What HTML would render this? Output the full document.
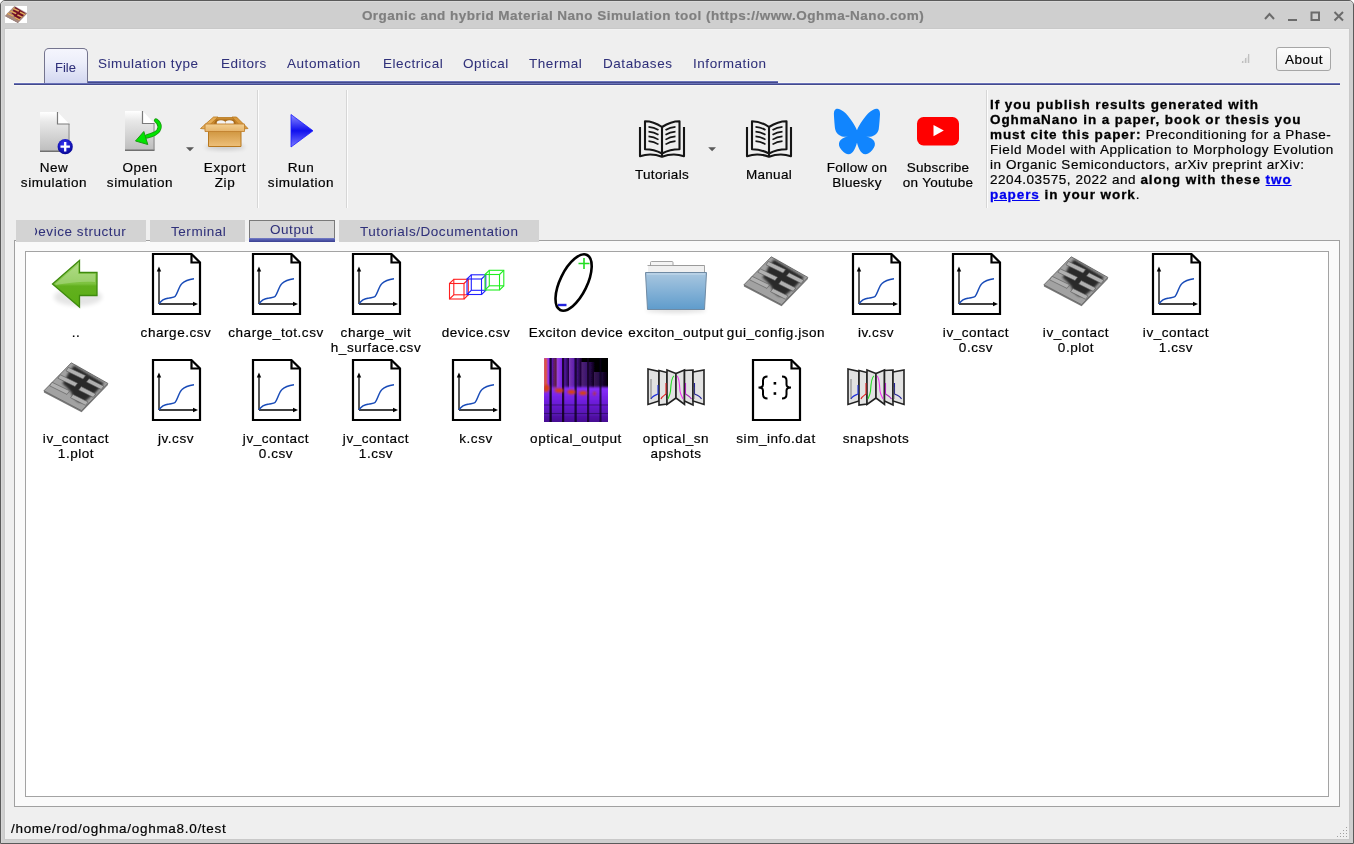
<!DOCTYPE html>
<html><head><meta charset="utf-8">
<style>
*{box-sizing:border-box}
html,body{margin:0;padding:0;width:1354px;height:844px;overflow:hidden;background:#ffffff}
body{position:relative;font-family:"Liberation Sans",sans-serif;font-size:14.7px;color:#000}
.a{position:absolute}
.t{position:absolute;white-space:nowrap;line-height:15px;font-size:13.5px;letter-spacing:0.55px;will-change:transform;-webkit-text-stroke:0.2px currentColor}
.c{text-align:center}
#win{left:0;top:0;width:1354px;height:844px;background:#cfcfcf;border:1px solid #5a5a5a;border-radius:5px 5px 0 0}
#content{left:5px;top:29px;width:1344px;height:810px;background:#efefef;border-top:1px solid #f3f3f3;border-left:1px solid #f2f2f2}
.tabtxt{color:#30317a;-webkit-text-stroke:0.05px currentColor}
.b{font-weight:bold;letter-spacing:0.92px;-webkit-text-stroke:0.3px currentColor}
</style></head><body>
<div id="win" class="a"></div>
<div class="a" style="left:1px;top:1px;width:1352px;height:842px;border-top:1px solid #d9d9d9;border-left:1px solid #d6d6d6;border-radius:4px 4px 0 0"></div>
<div class="a" style="left:4px;top:28px;width:1346px;height:812px;background:#c9c9c9"></div>
<div id="content" class="a"></div>

<!-- title -->
<div class="t" style="left:0;width:1354px;text-align:center;top:8px;font-weight:bold;font-size:13.5px;letter-spacing:0.47px;color:#7f7f7f;left:-34px">Organic and hybrid Material Nano Simulation tool (https://www.Oghma-Nano.com)</div>

<!-- main tab bar -->
<div class="a" style="left:14px;top:82px;width:1326px;height:4px;background:linear-gradient(#f6f6f4 0,#f6f6f4 25%,#6b73b9 25%,#6b73b9 50%,#434a8d 50%,#434a8d 75%,#f8f7f4 75%)"></div>
<div class="a" style="left:88px;top:80px;width:690px;height:3px;background:linear-gradient(#f6f6f4 0,#f6f6f4 33.3%,#6b73b9 33.3%,#6b73b9 66.6%,#434a8a 66.6%)"></div>
<div class="a" style="left:44px;top:48px;width:44px;height:35px;border:1px solid #74748e;border-bottom:none;border-radius:5px 5px 0 0;background:linear-gradient(#f5f5fd 0%,#eceefa 40%,#d3d7f1 100%)"></div>
<div class="t tabtxt" style="left:55px;top:60px;font-size:13px;letter-spacing:0">File</div>
<div class="t tabtxt" style="left:98px;top:55.5px">Simulation type</div>
<div class="t tabtxt" style="left:221px;top:55.5px">Editors</div>
<div class="t tabtxt" style="left:287px;top:55.5px">Automation</div>
<div class="t tabtxt" style="left:383px;top:55.5px">Electrical</div>
<div class="t tabtxt" style="left:463px;top:55.5px">Optical</div>
<div class="t tabtxt" style="left:529px;top:55.5px">Thermal</div>
<div class="t tabtxt" style="left:603px;top:55.5px">Databases</div>
<div class="t tabtxt" style="left:692.5px;top:55.5px">Information</div>

<!-- About -->
<div class="a" style="left:1276px;top:47px;width:55px;height:24px;border:1px solid #a6a6a6;border-radius:3px;background:linear-gradient(#fdfdfd,#ededed)"></div>
<div class="t" style="left:1284.5px;top:51.5px">About</div>

<!-- separators -->
<div class="a" style="left:257px;top:90px;width:2px;height:118px;background:linear-gradient(90deg,#d6d6d6 50%,#fdfdfd 50%)"></div>
<div class="a" style="left:346px;top:90px;width:2px;height:118px;background:linear-gradient(90deg,#d6d6d6 50%,#fdfdfd 50%)"></div>
<div class="a" style="left:986px;top:90px;width:2px;height:118px;background:linear-gradient(90deg,#d6d6d6 50%,#fdfdfd 50%)"></div>

<!-- toolbar labels -->
<div class="t c" style="left:14px;width:80px;top:159.5px">New<br>simulation</div>
<div class="t c" style="left:100px;width:80px;top:159.5px">Open<br>simulation</div>
<div class="t c" style="left:185px;width:80px;top:159.5px">Export<br>Zip</div>
<div class="t c" style="left:261px;width:80px;top:159.5px">Run<br>simulation</div>
<div class="t c" style="letter-spacing:0.3px;left:622px;width:80px;top:166.5px">Tutorials</div>
<div class="t c" style="letter-spacing:0.3px;left:729px;width:80px;top:166.5px">Manual</div>
<div class="t c" style="letter-spacing:0.3px;left:817px;width:80px;top:159.5px">Follow on<br>Bluesky</div>
<div class="t c" style="letter-spacing:0.3px;left:898px;width:80px;top:159.5px">Subscribe<br>on Youtube</div>

<!-- citation -->
<div class="t" style="left:990px;top:96.5px">
<span class="b">If you publish results generated with</span><br>
<span class="b">OghmaNano in a paper, book or thesis you</span><br>
<span class="b">must cite this paper:</span> Preconditioning for a Phase-<br>
Field Model with Application to Morphology Evolution<br>
in Organic Semiconductors, arXiv preprint arXiv:<br>
2204.03575, 2022 and <span class="b">along with these <u style="color:#0000ee">two</u></span><br>
<span class="b"><u style="color:#0000ee">papers</u> in your work</span>.
</div>

<!-- second tab bar -->
<div class="a" style="left:14px;top:240px;width:1326px;height:567px;background:#fafafa;border:1px solid #a0a0a0"></div>
<div class="a" style="left:16px;top:220px;width:130px;height:22px;background:#d3d3d3"></div>
<div class="a" style="left:150px;top:220px;width:95px;height:22px;background:#d3d3d3"></div>
<div class="a" style="left:245px;top:220px;width:94px;height:21px;background:#f2f2f2"></div>
<div class="a" style="left:249px;top:220px;width:86px;height:22px;background:#d6d6d6;border:1px solid #7a7a7a"></div>
<div class="a" style="left:249px;top:238px;width:86px;height:4px;background:linear-gradient(#7a82c8,#555db0 40%,#3a4090)"></div>
<div class="a" style="left:339px;top:220px;width:200px;height:22px;background:#d3d3d3"></div>
<div class="a" style="left:35px;top:220px;width:92px;height:22px;overflow:hidden"><div class="t tabtxt" style="left:-7px;top:3.5px">Device structur</div></div>
<div class="t tabtxt" style="left:170.5px;top:223.5px">Terminal</div>
<div class="t tabtxt" style="left:270px;top:221.5px">Output</div>
<div class="t tabtxt" style="left:359.5px;top:223.5px">Tutorials/Documentation</div>

<!-- file list -->
<div id="list" class="a" style="left:25px;top:251px;width:1304px;height:546px;background:#fff;border:1px solid #a3a3a3"></div>

<svg class="a" style="left:0;top:0" width="1354" height="844"><defs>
<filter id="blur1" x="-20%" y="-20%" width="140%" height="140%"><feGaussianBlur stdDeviation="1.2"/></filter>
<filter id="blur2" x="-50%" y="-50%" width="200%" height="200%"><feGaussianBlur stdDeviation="2"/></filter>
<filter id="blur05"><feGaussianBlur stdDeviation="0.5"/></filter>
<linearGradient id="gArrow" x1="0" y1="0" x2="0" y2="1"><stop offset="0" stop-color="#9fd46a"/><stop offset="0.5" stop-color="#7cc23e"/><stop offset="0.55" stop-color="#62b01e"/><stop offset="1" stop-color="#5aae14"/></linearGradient>
<linearGradient id="gFolder" x1="0" y1="0" x2="0" y2="1"><stop offset="0" stop-color="#a9c7e0"/><stop offset="1" stop-color="#5f9ccc"/></linearGradient>
<linearGradient id="gOptV" x1="0" y1="0" x2="0" y2="1"><stop offset="0" stop-color="#000" stop-opacity="0.95"/><stop offset="0.3" stop-color="#000" stop-opacity="0.7"/><stop offset="0.52" stop-color="#000" stop-opacity="0"/><stop offset="0.7" stop-color="#2a0060" stop-opacity="0.15"/><stop offset="1" stop-color="#2a0050" stop-opacity="0.4"/></linearGradient>
<linearGradient id="gOptH" x1="0" y1="0" x2="1" y2="0"><stop offset="0" stop-color="#000" stop-opacity="0"/><stop offset="0.45" stop-color="#000" stop-opacity="0.2"/><stop offset="1" stop-color="#000" stop-opacity="0.8"/></linearGradient>
<linearGradient id="gPage" x1="0" y1="0" x2="0" y2="1"><stop offset="0" stop-color="#ffffff"/><stop offset="0.25" stop-color="#e8e8e8"/><stop offset="1" stop-color="#bdbdbd"/></linearGradient>
<radialGradient id="gPlus" cx="0.45" cy="0.35" r="0.7"><stop offset="0" stop-color="#3a3aff"/><stop offset="1" stop-color="#00008a"/></radialGradient>
<linearGradient id="gRun" x1="0" y1="0" x2="0" y2="1"><stop offset="0" stop-color="#8a8aff"/><stop offset="0.5" stop-color="#1010ee"/><stop offset="1" stop-color="#7a7aff"/></linearGradient>
<linearGradient id="gBox" x1="0" y1="0" x2="0" y2="1"><stop offset="0" stop-color="#d09640"/><stop offset="1" stop-color="#eec07a"/></linearGradient>
<linearGradient id="gLid" x1="0" y1="0" x2="0" y2="1"><stop offset="0" stop-color="#f2cf92"/><stop offset="1" stop-color="#e6b46a"/></linearGradient>
</defs>
<!-- window icon -->
<rect x="5" y="6" width="22" height="17" fill="#fff"/>
<!-- window controls -->
<g stroke="#6b6b6b" stroke-width="2" fill="none">
<path d="M1265,19 L1269.5,14 L1274,19"/>
<path d="M1288,20 H1297"/>
<rect x="1311.5" y="12.5" width="7.5" height="7.5"/>
<path d="M1334.5,12 L1343,20.5 M1343,12 L1334.5,20.5"/>
</g>
<!-- signal icon -->
<g fill="#c0c0c0"><path d="M1241,63 L1249,55 V63 Z" fill="#e4e4e4"/><rect x="1242" y="61" width="1.3" height="2"/><rect x="1245" y="58" width="1.3" height="5"/><rect x="1248" y="54" width="1.3" height="9"/></g>
<!-- new simulation -->
<g>
<path d="M40,112 H57.5 L69.5,124 V151.5 H40 Z" fill="url(#gPage)"/>
<path d="M40,150.5 H69.5 V152 H40 Z" fill="#707070"/>
<path d="M69,124 V151" stroke="#8a8a8a" stroke-width="1"/>
<path d="M57.5,112 V124 H69.5 Z" fill="#fff"/>
<path d="M57.5,112 V124 H69.5" fill="none" stroke="#7a7a7a" stroke-width="1.2"/>
<circle cx="65.2" cy="146.7" r="7.6" fill="url(#gPlus)"/>
<path d="M60.5,146.7 H69.9 M65.2,142 V151.4" stroke="#fff" stroke-width="2.3"/>
</g>
<!-- open simulation -->
<g>
<path d="M125,111 H142.5 L154.5,123.5 V150.5 H125 Z" fill="url(#gPage)"/>
<path d="M125,149.5 H154.5 V151 H125 Z" fill="#707070"/>
<path d="M154,123.5 V150" stroke="#8a8a8a" stroke-width="1"/>
<path d="M142.5,111 V123.5 H154.5 Z" fill="#fff"/>
<path d="M142.5,111 V123.5 H154.5" fill="none" stroke="#7a7a7a" stroke-width="1.2"/>
<path d="M156,120.5 C161,124 161,130 155,133.5 C151,135.5 148.5,136 146.5,136.5" fill="none" stroke="#1a9a10" stroke-width="4.2" stroke-linecap="round"/>
<path d="M156,120.5 C161,124 161,130 155,133.5 C151,135.5 148.5,136 146.5,136.5" fill="none" stroke="#00e400" stroke-width="2.6" stroke-linecap="round"/>
<path d="M135.5,141 L143.8,131.5 L147.8,144.5 Z" fill="#00e400" stroke="#1a9a10" stroke-width="1" stroke-linejoin="round"/>
</g>
<!-- dropdown arrows -->
<path d="M186,147.2 H194 L190,151.3 Z" fill="#5a5a5a"/>
<path d="M708.2,147.2 H716 L712.1,151.3 Z" fill="#5a5a5a"/>
<!-- export zip -->
<g>
<ellipse cx="225" cy="147" rx="20" ry="3" fill="#000" opacity="0.15" filter="url(#blur2)"/>
<path d="M213.5,117.5 H236.5 L241,124.5 H209 Z" fill="#c98a30" stroke="#b8781e" stroke-width="0.8"/>
<path d="M216,119.5 H234 L236.5,124.5 H213.5 Z" fill="#a86a1a"/>
<ellipse cx="221" cy="123" rx="4.3" ry="2.7" fill="#f4f4f4"/>
<ellipse cx="229.5" cy="123" rx="4.3" ry="2.7" fill="#f4f4f4"/>
<path d="M213.5,117 H218 L205.5,129 L200.5,128.5 Z" fill="#e6ad58" stroke="#b8781e" stroke-width="0.8" stroke-linejoin="round"/>
<path d="M232,117 H236.5 L248,128.5 L243,129 Z" fill="#d9993e" stroke="#b8781e" stroke-width="0.8" stroke-linejoin="round"/>
<path d="M208.5,131 H241 V146.5 H208.5 Z" fill="url(#gBox)" stroke="#b8781e" stroke-width="1"/>
<path d="M205,124 H244.5 L244.5,131.5 H205 Z" fill="url(#gLid)" stroke="#c28230" stroke-width="0.9"/>
</g>
<!-- run -->
<path d="M291,114.5 L313,130.8 L291,147 Z" fill="url(#gRun)" stroke="#1a1aff" stroke-width="0.8" stroke-linejoin="round"/>
<!-- books -->
<g id="book" fill="none" stroke="#151515" stroke-width="2.1" stroke-linejoin="round" stroke-linecap="butt">
<g transform="translate(639,120)">
<path d="M1,7 V36.2 Q12,32.5 23,36.8 Q34,32.5 45,36.2 V7"/>
<path d="M23,7 Q14.5,1.2 6,1.2 V29.2 Q15,29.2 23,33.5 Q31,29.2 40.5,29.2 V1.2 Q32,1.2 23,7 Z"/>
<path d="M23,7 V36"/>
<g stroke-width="1.7">
<path d="M9.5,6.8 Q15,7.2 19.5,10"/><path d="M9.5,11.6 Q15,12 19.5,14.8"/><path d="M9.5,16.4 Q15,16.8 19.5,19.6"/><path d="M9.5,21.2 Q15,21.6 19.5,24.4"/>
<path d="M26.5,10 Q31,7.2 36.5,6.8"/><path d="M26.5,14.8 Q31,12 36.5,11.6"/><path d="M26.5,19.6 Q31,16.8 36.5,16.4"/><path d="M26.5,24.4 Q31,21.6 36.5,21.2"/>
</g></g></g>
<g fill="none" stroke="#151515" stroke-width="2.1" stroke-linejoin="round">
<g transform="translate(746,120)">
<path d="M1,7 V36.2 Q12,32.5 23,36.8 Q34,32.5 45,36.2 V7"/>
<path d="M23,7 Q14.5,1.2 6,1.2 V29.2 Q15,29.2 23,33.5 Q31,29.2 40.5,29.2 V1.2 Q32,1.2 23,7 Z"/>
<path d="M23,7 V36"/>
<g stroke-width="1.7">
<path d="M9.5,6.8 Q15,7.2 19.5,10"/><path d="M9.5,11.6 Q15,12 19.5,14.8"/><path d="M9.5,16.4 Q15,16.8 19.5,19.6"/><path d="M9.5,21.2 Q15,21.6 19.5,24.4"/>
<path d="M26.5,10 Q31,7.2 36.5,6.8"/><path d="M26.5,14.8 Q31,12 36.5,11.6"/><path d="M26.5,19.6 Q31,16.8 36.5,16.4"/><path d="M26.5,24.4 Q31,21.6 36.5,21.2"/>
</g></g></g>
<!-- bluesky -->
<g transform="translate(833.9,108.6) scale(0.0795,0.0892) translate(-10,-8)">
<path fill="#1185fe" d="M135.72 44.03C202.216 93.951 273.74 195.17 300 249.49c26.262-54.316 97.782-155.54 164.28-205.46C512.26 8.009 590-19.862 590 68.825c0 17.712-10.155 148.79-16.111 170.07-20.703 73.984-96.144 92.854-163.25 81.433 117.3 19.964 147.14 86.092 82.697 152.22-122.39 125.59-175.91-31.511-189.63-71.766-2.514-7.38-3.69-10.832-3.708-7.896-.017-2.936-1.193.516-3.707 7.896-13.714 40.255-67.233 197.36-189.63 71.766-64.444-66.128-34.605-132.26 82.697-152.22-67.108 11.421-142.55-7.449-163.25-81.433C20.15 217.613 9.997 86.535 9.997 68.825c0-88.687 77.742-60.816 125.72-24.795z"/>
</g>
<!-- youtube -->
<rect x="917" y="117" width="42" height="28.5" rx="6.5" fill="#ff0000"/>
<path d="M933.5,125 L943.8,130.6 L933.5,136.2 Z" fill="#fff"/>
<g><ellipse cx="78" cy="297" rx="24" ry="9" fill="#000" opacity="0.10" filter="url(#blur2)"/><path d="M52.5,284 L79.5,260.5 V272.5 H97 V295.5 H79.5 V307 Z" fill="url(#gArrow)" stroke="#3e8a0e" stroke-width="1.3" stroke-linejoin="miter"/><path d="M55,284 L78,264.5 V274 H95 V282 C82,281 68,283 56,285 Z" fill="#fff" opacity="0.22"/></g>
<g transform="translate(152,253)"><path d="M1,1 H39.5 L48,9.5 V61 H1 Z" fill="#fff" stroke="#000" stroke-width="2.2" stroke-linejoin="miter"/><path d="M39.5,1 V9.5 H48" fill="none" stroke="#000" stroke-width="2.2"/><path d="M7,51 V16" stroke="#000" stroke-width="1.3" fill="none"/><path d="M7,13.5 L4.8,18.5 H9.2 Z" fill="#000"/><path d="M7,51 H42" stroke="#000" stroke-width="1.3" fill="none"/><path d="M46,51 L41,48.8 V53.2 Z" fill="#000"/><path d="M7,51 C9,47.5 13,45.5 17,45 C20,44.5 22,44.5 23,43.5 C25.5,41 27,33 30,30.5 C33,27.5 38,26.2 42,25.7" stroke="#1a4cb8" stroke-width="1.5" fill="none"/></g>
<g transform="translate(252,253)"><path d="M1,1 H39.5 L48,9.5 V61 H1 Z" fill="#fff" stroke="#000" stroke-width="2.2" stroke-linejoin="miter"/><path d="M39.5,1 V9.5 H48" fill="none" stroke="#000" stroke-width="2.2"/><path d="M7,51 V16" stroke="#000" stroke-width="1.3" fill="none"/><path d="M7,13.5 L4.8,18.5 H9.2 Z" fill="#000"/><path d="M7,51 H42" stroke="#000" stroke-width="1.3" fill="none"/><path d="M46,51 L41,48.8 V53.2 Z" fill="#000"/><path d="M7,51 C9,47.5 13,45.5 17,45 C20,44.5 22,44.5 23,43.5 C25.5,41 27,33 30,30.5 C33,27.5 38,26.2 42,25.7" stroke="#1a4cb8" stroke-width="1.5" fill="none"/></g>
<g transform="translate(352,253)"><path d="M1,1 H39.5 L48,9.5 V61 H1 Z" fill="#fff" stroke="#000" stroke-width="2.2" stroke-linejoin="miter"/><path d="M39.5,1 V9.5 H48" fill="none" stroke="#000" stroke-width="2.2"/><path d="M7,51 V16" stroke="#000" stroke-width="1.3" fill="none"/><path d="M7,13.5 L4.8,18.5 H9.2 Z" fill="#000"/><path d="M7,51 H42" stroke="#000" stroke-width="1.3" fill="none"/><path d="M46,51 L41,48.8 V53.2 Z" fill="#000"/><path d="M7,51 C9,47.5 13,45.5 17,45 C20,44.5 22,44.5 23,43.5 C25.5,41 27,33 30,30.5 C33,27.5 38,26.2 42,25.7" stroke="#1a4cb8" stroke-width="1.5" fill="none"/></g>
<g transform="translate(852,253)"><path d="M1,1 H39.5 L48,9.5 V61 H1 Z" fill="#fff" stroke="#000" stroke-width="2.2" stroke-linejoin="miter"/><path d="M39.5,1 V9.5 H48" fill="none" stroke="#000" stroke-width="2.2"/><path d="M7,51 V16" stroke="#000" stroke-width="1.3" fill="none"/><path d="M7,13.5 L4.8,18.5 H9.2 Z" fill="#000"/><path d="M7,51 H42" stroke="#000" stroke-width="1.3" fill="none"/><path d="M46,51 L41,48.8 V53.2 Z" fill="#000"/><path d="M7,51 C9,47.5 13,45.5 17,45 C20,44.5 22,44.5 23,43.5 C25.5,41 27,33 30,30.5 C33,27.5 38,26.2 42,25.7" stroke="#1a4cb8" stroke-width="1.5" fill="none"/></g>
<g transform="translate(952,253)"><path d="M1,1 H39.5 L48,9.5 V61 H1 Z" fill="#fff" stroke="#000" stroke-width="2.2" stroke-linejoin="miter"/><path d="M39.5,1 V9.5 H48" fill="none" stroke="#000" stroke-width="2.2"/><path d="M7,51 V16" stroke="#000" stroke-width="1.3" fill="none"/><path d="M7,13.5 L4.8,18.5 H9.2 Z" fill="#000"/><path d="M7,51 H42" stroke="#000" stroke-width="1.3" fill="none"/><path d="M46,51 L41,48.8 V53.2 Z" fill="#000"/><path d="M7,51 C9,47.5 13,45.5 17,45 C20,44.5 22,44.5 23,43.5 C25.5,41 27,33 30,30.5 C33,27.5 38,26.2 42,25.7" stroke="#1a4cb8" stroke-width="1.5" fill="none"/></g>
<g transform="translate(1152,253)"><path d="M1,1 H39.5 L48,9.5 V61 H1 Z" fill="#fff" stroke="#000" stroke-width="2.2" stroke-linejoin="miter"/><path d="M39.5,1 V9.5 H48" fill="none" stroke="#000" stroke-width="2.2"/><path d="M7,51 V16" stroke="#000" stroke-width="1.3" fill="none"/><path d="M7,13.5 L4.8,18.5 H9.2 Z" fill="#000"/><path d="M7,51 H42" stroke="#000" stroke-width="1.3" fill="none"/><path d="M46,51 L41,48.8 V53.2 Z" fill="#000"/><path d="M7,51 C9,47.5 13,45.5 17,45 C20,44.5 22,44.5 23,43.5 C25.5,41 27,33 30,30.5 C33,27.5 38,26.2 42,25.7" stroke="#1a4cb8" stroke-width="1.5" fill="none"/></g>
<g stroke="#ff2020" stroke-width="1.1" fill="none"><rect x="453.8" y="279.3" width="14.5" height="15.5"/><rect x="449.5" y="283.5" width="14.5" height="15.5"/><path d="M449.5,283.5 l4.3,-4.2 M464.0,283.5 l4.3,-4.2 M449.5,299.0 l4.3,-4.2 M464.0,299.0 l4.3,-4.2"/></g>
<g stroke="#2020ff" stroke-width="1.1" fill="none"><rect x="471.3" y="274.8" width="14.5" height="15.5"/><rect x="467" y="279" width="14.5" height="15.5"/><path d="M467,279 l4.3,-4.2 M481.5,279 l4.3,-4.2 M467,294.5 l4.3,-4.2 M481.5,294.5 l4.3,-4.2"/></g>
<g stroke="#20ee20" stroke-width="1.1" fill="none"><rect x="489.3" y="270.3" width="14.5" height="15.5"/><rect x="485" y="274.5" width="14.5" height="15.5"/><path d="M485,274.5 l4.3,-4.2 M499.5,274.5 l4.3,-4.2 M485,290.0 l4.3,-4.2 M499.5,290.0 l4.3,-4.2"/></g>
<ellipse cx="573.6" cy="282.5" rx="13.5" ry="30.6" transform="rotate(26 573.6 282.5)" fill="none" stroke="#000" stroke-width="2.6"/><path d="M578.5,263.5 H589.5 M584,258 V269" stroke="#22dd22" stroke-width="1.6"/><path d="M558,305 H566.5" stroke="#2222dd" stroke-width="2.4"/>
<g><ellipse cx="676" cy="310" rx="30" ry="3" fill="#000" opacity="0.12" filter="url(#blur2)"/><path d="M650.5,272 V262.5 Q650.5,261.5 651.5,261.5 H672 Q673,261.5 673,262.5 V265.5 H703.5 Q704.5,265.5 704.5,266.5 V272 Z" fill="#f4f4f4" stroke="#9a9a9a" stroke-width="0.9"/><path d="M648,266 H705 V272 H648 Z" fill="#f0f0f0"/><path d="M647.5,265.5 H704.5 V273" fill="none" stroke="#9a9a9a" stroke-width="0.9"/><path d="M645.5,272.5 H706.5 L704.5,309.5 H647.5 Z" fill="url(#gFolder)" stroke="#6f8aa3" stroke-width="1" stroke-linejoin="round"/><path d="M647,274 H705" stroke="#c8dcec" stroke-width="1"/></g>
<g transform="translate(743,253)"><path d="M0.9,31.8 L28.3,3.8 L64.9,24.4 L38.6,51.7 Z" fill="#a2a2a2"/><path d="M0.9,31.8 L38.6,51.7 L64.9,24.4 L64.9,26 L38.6,53.3 L0.9,33.4 Z" fill="#7a7a7a"/><path d="M0.9,31.8 L28.3,3.8 L64.9,24.4 L38.6,51.7 Z" fill="none" stroke="#5a5a5a" stroke-width="0.8" stroke-linejoin="round"/><path d="M31,6.5 L61,24.5 L52,34 L42,42.5 L36,43.5 L30.5,39 L28,33 L24,28.5 L19.5,24.5 L23,19 L26,13 Z" fill="#2a2a2a" filter="url(#blur1)"/><g fill="#b0b0b0" stroke="#555" stroke-width="0.6" stroke-linejoin="round"><path d="M25.4,8.4 L42.6,16.6 L40,20 L23,11.8 Z"/><path d="M17.3,15.8 L34.6,24.2 L32,27.6 L14.8,19.2 Z"/><path d="M9.1,23.3 L26.6,31.8 L24,35.4 L6.6,26.8 Z"/><path d="M46,19.7 L60.8,27.2 L58.3,30.5 L43.5,23 Z"/><path d="M38.2,27.6 L52.8,35 L50.2,38.3 L35.7,31 Z"/><path d="M30,35.4 L45.2,43 L42.6,46.3 L27.5,38.7 Z"/></g></g>
<g transform="translate(1043,253)"><path d="M0.9,31.8 L28.3,3.8 L64.9,24.4 L38.6,51.7 Z" fill="#a2a2a2"/><path d="M0.9,31.8 L38.6,51.7 L64.9,24.4 L64.9,26 L38.6,53.3 L0.9,33.4 Z" fill="#7a7a7a"/><path d="M0.9,31.8 L28.3,3.8 L64.9,24.4 L38.6,51.7 Z" fill="none" stroke="#5a5a5a" stroke-width="0.8" stroke-linejoin="round"/><path d="M31,6.5 L61,24.5 L52,34 L42,42.5 L36,43.5 L30.5,39 L28,33 L24,28.5 L19.5,24.5 L23,19 L26,13 Z" fill="#2a2a2a" filter="url(#blur1)"/><g fill="#b0b0b0" stroke="#555" stroke-width="0.6" stroke-linejoin="round"><path d="M25.4,8.4 L42.6,16.6 L40,20 L23,11.8 Z"/><path d="M17.3,15.8 L34.6,24.2 L32,27.6 L14.8,19.2 Z"/><path d="M9.1,23.3 L26.6,31.8 L24,35.4 L6.6,26.8 Z"/><path d="M46,19.7 L60.8,27.2 L58.3,30.5 L43.5,23 Z"/><path d="M38.2,27.6 L52.8,35 L50.2,38.3 L35.7,31 Z"/><path d="M30,35.4 L45.2,43 L42.6,46.3 L27.5,38.7 Z"/></g></g>
<g transform="translate(43,359)"><path d="M0.9,31.8 L28.3,3.8 L64.9,24.4 L38.6,51.7 Z" fill="#a2a2a2"/><path d="M0.9,31.8 L38.6,51.7 L64.9,24.4 L64.9,26 L38.6,53.3 L0.9,33.4 Z" fill="#7a7a7a"/><path d="M0.9,31.8 L28.3,3.8 L64.9,24.4 L38.6,51.7 Z" fill="none" stroke="#5a5a5a" stroke-width="0.8" stroke-linejoin="round"/><path d="M31,6.5 L61,24.5 L52,34 L42,42.5 L36,43.5 L30.5,39 L28,33 L24,28.5 L19.5,24.5 L23,19 L26,13 Z" fill="#2a2a2a" filter="url(#blur1)"/><g fill="#b0b0b0" stroke="#555" stroke-width="0.6" stroke-linejoin="round"><path d="M25.4,8.4 L42.6,16.6 L40,20 L23,11.8 Z"/><path d="M17.3,15.8 L34.6,24.2 L32,27.6 L14.8,19.2 Z"/><path d="M9.1,23.3 L26.6,31.8 L24,35.4 L6.6,26.8 Z"/><path d="M46,19.7 L60.8,27.2 L58.3,30.5 L43.5,23 Z"/><path d="M38.2,27.6 L52.8,35 L50.2,38.3 L35.7,31 Z"/><path d="M30,35.4 L45.2,43 L42.6,46.3 L27.5,38.7 Z"/></g></g>
<g transform="translate(4.9,4.9) scale(0.338)"><path d="M0.9,31.8 L28.3,3.8 L64.9,24.4 L38.6,51.7 Z" fill="#a88a80"/><path d="M0.9,31.8 L38.6,51.7 L64.9,24.4 L64.9,26 L38.6,53.3 L0.9,33.4 Z" fill="#806058"/><path d="M0.9,31.8 L28.3,3.8 L64.9,24.4 L38.6,51.7 Z" fill="none" stroke="#7a5a50" stroke-width="0.8" stroke-linejoin="round"/><path d="M31,6.5 L61,24.5 L52,34 L42,42.5 L36,43.5 L30.5,39 L28,33 L24,28.5 L19.5,24.5 L23,19 L26,13 Z" fill="#700a28" filter="url(#blur1)"/><g fill="#e8b464" stroke="#a06030" stroke-width="0.6" stroke-linejoin="round"><path d="M25.4,8.4 L42.6,16.6 L40,20 L23,11.8 Z"/><path d="M17.3,15.8 L34.6,24.2 L32,27.6 L14.8,19.2 Z"/><path d="M9.1,23.3 L26.6,31.8 L24,35.4 L6.6,26.8 Z"/><path d="M46,19.7 L60.8,27.2 L58.3,30.5 L43.5,23 Z"/><path d="M38.2,27.6 L52.8,35 L50.2,38.3 L35.7,31 Z"/><path d="M30,35.4 L45.2,43 L42.6,46.3 L27.5,38.7 Z"/></g></g>
<g transform="translate(152,359)"><path d="M1,1 H39.5 L48,9.5 V61 H1 Z" fill="#fff" stroke="#000" stroke-width="2.2" stroke-linejoin="miter"/><path d="M39.5,1 V9.5 H48" fill="none" stroke="#000" stroke-width="2.2"/><path d="M7,51 V16" stroke="#000" stroke-width="1.3" fill="none"/><path d="M7,13.5 L4.8,18.5 H9.2 Z" fill="#000"/><path d="M7,51 H42" stroke="#000" stroke-width="1.3" fill="none"/><path d="M46,51 L41,48.8 V53.2 Z" fill="#000"/><path d="M7,51 C9,47.5 13,45.5 17,45 C20,44.5 22,44.5 23,43.5 C25.5,41 27,33 30,30.5 C33,27.5 38,26.2 42,25.7" stroke="#1a4cb8" stroke-width="1.5" fill="none"/></g>
<g transform="translate(252,359)"><path d="M1,1 H39.5 L48,9.5 V61 H1 Z" fill="#fff" stroke="#000" stroke-width="2.2" stroke-linejoin="miter"/><path d="M39.5,1 V9.5 H48" fill="none" stroke="#000" stroke-width="2.2"/><path d="M7,51 V16" stroke="#000" stroke-width="1.3" fill="none"/><path d="M7,13.5 L4.8,18.5 H9.2 Z" fill="#000"/><path d="M7,51 H42" stroke="#000" stroke-width="1.3" fill="none"/><path d="M46,51 L41,48.8 V53.2 Z" fill="#000"/><path d="M7,51 C9,47.5 13,45.5 17,45 C20,44.5 22,44.5 23,43.5 C25.5,41 27,33 30,30.5 C33,27.5 38,26.2 42,25.7" stroke="#1a4cb8" stroke-width="1.5" fill="none"/></g>
<g transform="translate(352,359)"><path d="M1,1 H39.5 L48,9.5 V61 H1 Z" fill="#fff" stroke="#000" stroke-width="2.2" stroke-linejoin="miter"/><path d="M39.5,1 V9.5 H48" fill="none" stroke="#000" stroke-width="2.2"/><path d="M7,51 V16" stroke="#000" stroke-width="1.3" fill="none"/><path d="M7,13.5 L4.8,18.5 H9.2 Z" fill="#000"/><path d="M7,51 H42" stroke="#000" stroke-width="1.3" fill="none"/><path d="M46,51 L41,48.8 V53.2 Z" fill="#000"/><path d="M7,51 C9,47.5 13,45.5 17,45 C20,44.5 22,44.5 23,43.5 C25.5,41 27,33 30,30.5 C33,27.5 38,26.2 42,25.7" stroke="#1a4cb8" stroke-width="1.5" fill="none"/></g>
<g transform="translate(452,359)"><path d="M1,1 H39.5 L48,9.5 V61 H1 Z" fill="#fff" stroke="#000" stroke-width="2.2" stroke-linejoin="miter"/><path d="M39.5,1 V9.5 H48" fill="none" stroke="#000" stroke-width="2.2"/><path d="M7,51 V16" stroke="#000" stroke-width="1.3" fill="none"/><path d="M7,13.5 L4.8,18.5 H9.2 Z" fill="#000"/><path d="M7,51 H42" stroke="#000" stroke-width="1.3" fill="none"/><path d="M46,51 L41,48.8 V53.2 Z" fill="#000"/><path d="M7,51 C9,47.5 13,45.5 17,45 C20,44.5 22,44.5 23,43.5 C25.5,41 27,33 30,30.5 C33,27.5 38,26.2 42,25.7" stroke="#1a4cb8" stroke-width="1.5" fill="none"/></g>
<g transform="translate(544,358)"><clipPath id="clipOpt"><rect x="0" y="0" width="64" height="64"/></clipPath><linearGradient id="gBand" x1="0" y1="0" x2="1" y2="0"><stop offset="0" stop-color="#b050ff"/><stop offset="0.45" stop-color="#8024f8"/><stop offset="1" stop-color="#180030"/></linearGradient><linearGradient id="gBandV" x1="0" y1="0" x2="0" y2="1"><stop offset="0" stop-color="#000" stop-opacity="0.35"/><stop offset="1" stop-color="#000" stop-opacity="0"/></linearGradient><linearGradient id="gLow" x1="0" y1="0" x2="0" y2="1"><stop offset="0" stop-color="#8a30ff"/><stop offset="0.4" stop-color="#6c1cd8"/><stop offset="1" stop-color="#3c0880"/></linearGradient><g clip-path="url(#clipOpt)"><rect width="64" height="64" fill="#000"/><g filter="url(#blur05)"><rect x="0" y="0" width="13" height="34" fill="url(#gBand)"/><rect x="12.5" y="0" width="13" height="34" fill="url(#gBand)" opacity="0.9"/><rect x="25" y="0" width="13" height="34" fill="url(#gBand)" opacity="0.7"/><rect x="37.5" y="4" width="13" height="30" fill="url(#gBand)" opacity="0.45"/><rect x="50" y="14" width="13" height="20" fill="url(#gBand)" opacity="0.3"/></g><rect x="-4" y="29" width="72" height="40" fill="url(#gLow)" filter="url(#blur1)"/><g filter="url(#blur05)"><rect x="5.5" y="0" width="2.2" height="64" fill="#0a0018" opacity="0.9"/><rect x="18" y="0" width="2.2" height="64" fill="#0a0018" opacity="0.85"/><rect x="30.5" y="0" width="2.2" height="64" fill="#0a0018" opacity="0.8"/><rect x="43" y="0" width="2.2" height="64" fill="#0a0018" opacity="0.75"/><rect x="55.5" y="0" width="2" height="64" fill="#0a0018" opacity="0.7"/></g><g filter="url(#blur1)"><rect x="0" y="0" width="3" height="34" fill="#e8581a"/><rect x="10.5" y="0" width="1.2" height="34" fill="#d04818" opacity="0.8"/><ellipse cx="2.5" cy="30" rx="3" ry="3.5" fill="#d8400e"/><ellipse cx="15.5" cy="32.5" rx="4" ry="2.2" fill="#d8420e"/><ellipse cx="27.5" cy="34" rx="4" ry="2.2" fill="#d8420e"/><ellipse cx="39" cy="35" rx="4" ry="2" fill="#d8420e"/><ellipse cx="50.5" cy="35.5" rx="1.2" ry="2" fill="#c03a18"/></g><rect x="0" y="46.5" width="64" height="1" fill="#100020" opacity="0.5"/><rect x="0" y="55" width="64" height="1" fill="#100020" opacity="0.4"/></g></g>
<g transform="translate(648,369)">
<polygon points="0,0 11,2.5 11,32 0,35.5" fill="#e2e2e2" stroke="#222" stroke-width="1.6"/>
<polygon points="11,1.5 19,3.5 19,35 11,36" fill="#e2e2e2" stroke="#222" stroke-width="1.6"/>
<polygon points="19,1 28,4.5 28,29 19,35.5" fill="#e2e2e2" stroke="#222" stroke-width="1.6"/>
<polygon points="28,4.5 36.5,1 36.5,35.5 28,29" fill="#e2e2e2" stroke="#222" stroke-width="1.6"/>
<polygon points="36.5,1.5 45,1 45,36 36.5,32" fill="#e2e2e2" stroke="#222" stroke-width="1.6"/>
<polygon points="45,3 56,1 56,35.5 45,32" fill="#e2e2e2" stroke="#222" stroke-width="1.6"/>
<path d="M3,30 C4,27 8,26 10,25 V16" stroke="#2233dd" stroke-width="1.1" fill="none"/><path d="M13,30 C14,27 17,26 18,25 V14" stroke="#dd2222" stroke-width="1.1" fill="none"/><path d="M20,30 C21,27 22,26 22.5,22 C23,14 23.5,8 26,7" stroke="#22dd22" stroke-width="1.1" fill="none"/><path d="M29,7 C31,8 31.5,14 32,22 C32.5,26 34,27 35,30" stroke="#ee33ee" stroke-width="1.1" fill="none"/><path d="M37.5,14 V25 C39,26 42,27 43.5,30" stroke="#aa22bb" stroke-width="1.1" fill="none"/><path d="M46.5,14 V25 C49,26 52,27 53.5,30" stroke="#222299" stroke-width="1.1" fill="none"/><path d="M3,10 V30 M46,18 V30" stroke="#555" stroke-width="0.7" fill="none"/>
</g>
<g transform="translate(752,359)"><path d="M1,1 H39.5 L48,9.5 V61 H1 Z" fill="#fff" stroke="#000" stroke-width="2.2" stroke-linejoin="miter"/><path d="M39.5,1 V9.5 H48" fill="none" stroke="#000" stroke-width="2.2"/><path d="M15.5,17.5 Q11,17.5 11,21.5 V25.5 Q11,28.5 6.5,28.5 Q11,28.5 11,31.5 V35.5 Q11,39.5 15.5,39.5 M30,17.5 Q34.5,17.5 34.5,21.5 V25.5 Q34.5,28.5 39,28.5 Q34.5,28.5 34.5,31.5 V35.5 Q34.5,39.5 30,39.5" fill="none" stroke="#000" stroke-width="2"/><rect x="21.6" y="23" width="2.6" height="2.6"/><rect x="21.6" y="33.2" width="2.6" height="2.6"/></g>
<g transform="translate(848,369)">
<polygon points="0,0 11,2.5 11,32 0,35.5" fill="#e2e2e2" stroke="#222" stroke-width="1.6"/>
<polygon points="11,1.5 19,3.5 19,35 11,36" fill="#e2e2e2" stroke="#222" stroke-width="1.6"/>
<polygon points="19,1 28,4.5 28,29 19,35.5" fill="#e2e2e2" stroke="#222" stroke-width="1.6"/>
<polygon points="28,4.5 36.5,1 36.5,35.5 28,29" fill="#e2e2e2" stroke="#222" stroke-width="1.6"/>
<polygon points="36.5,1.5 45,1 45,36 36.5,32" fill="#e2e2e2" stroke="#222" stroke-width="1.6"/>
<polygon points="45,3 56,1 56,35.5 45,32" fill="#e2e2e2" stroke="#222" stroke-width="1.6"/>
<path d="M3,30 C4,27 8,26 10,25 V16" stroke="#2233dd" stroke-width="1.1" fill="none"/><path d="M13,30 C14,27 17,26 18,25 V14" stroke="#dd2222" stroke-width="1.1" fill="none"/><path d="M20,30 C21,27 22,26 22.5,22 C23,14 23.5,8 26,7" stroke="#22dd22" stroke-width="1.1" fill="none"/><path d="M29,7 C31,8 31.5,14 32,22 C32.5,26 34,27 35,30" stroke="#ee33ee" stroke-width="1.1" fill="none"/><path d="M37.5,14 V25 C39,26 42,27 43.5,30" stroke="#aa22bb" stroke-width="1.1" fill="none"/><path d="M46.5,14 V25 C49,26 52,27 53.5,30" stroke="#222299" stroke-width="1.1" fill="none"/><path d="M3,10 V30 M46,18 V30" stroke="#555" stroke-width="0.7" fill="none"/>
</g></svg>
<div class="t c" style="left:16px;width:120px;top:325.2px">..</div>
<div class="t c" style="left:116px;width:120px;top:325.2px">charge.csv</div>
<div class="t c" style="left:216px;width:120px;top:325.2px">charge_tot.csv</div>
<div class="t c" style="left:316px;width:120px;top:325.2px">charge_wit<br>h_surface.csv</div>
<div class="t c" style="left:416px;width:120px;top:325.2px">device.csv</div>
<div class="t c" style="left:516px;width:120px;top:325.2px">Exciton device</div>
<div class="t c" style="left:616px;width:120px;top:325.2px">exciton_output</div>
<div class="t c" style="left:716px;width:120px;top:325.2px">gui_config.json</div>
<div class="t c" style="left:816px;width:120px;top:325.2px">iv.csv</div>
<div class="t c" style="left:916px;width:120px;top:325.2px">iv_contact<br>0.csv</div>
<div class="t c" style="left:1016px;width:120px;top:325.2px">iv_contact<br>0.plot</div>
<div class="t c" style="left:1116px;width:120px;top:325.2px">iv_contact<br>1.csv</div>
<div class="t c" style="left:16px;width:120px;top:431.2px">iv_contact<br>1.plot</div>
<div class="t c" style="left:116px;width:120px;top:431.2px">jv.csv</div>
<div class="t c" style="left:216px;width:120px;top:431.2px">jv_contact<br>0.csv</div>
<div class="t c" style="left:316px;width:120px;top:431.2px">jv_contact<br>1.csv</div>
<div class="t c" style="left:416px;width:120px;top:431.2px">k.csv</div>
<div class="t c" style="left:516px;width:120px;top:431.2px">optical_output</div>
<div class="t c" style="left:616px;width:120px;top:431.2px">optical_sn<br>apshots</div>
<div class="t c" style="left:716px;width:120px;top:431.2px">sim_info.dat</div>
<div class="t c" style="left:816px;width:120px;top:431.2px">snapshots</div>
<!-- grip -->
<div class="a" style="left:1346px;top:827px;width:1px;height:1px;background:#a0a0a0"></div><div class="a" style="left:1346px;top:830px;width:1px;height:1px;background:#a0a0a0"></div><div class="a" style="left:1343px;top:830px;width:1px;height:1px;background:#a0a0a0"></div><div class="a" style="left:1346px;top:833px;width:1px;height:1px;background:#a0a0a0"></div><div class="a" style="left:1343px;top:833px;width:1px;height:1px;background:#a0a0a0"></div><div class="a" style="left:1340px;top:833px;width:1px;height:1px;background:#a0a0a0"></div><div class="a" style="left:1346px;top:836px;width:1px;height:1px;background:#a0a0a0"></div><div class="a" style="left:1343px;top:836px;width:1px;height:1px;background:#a0a0a0"></div><div class="a" style="left:1340px;top:836px;width:1px;height:1px;background:#a0a0a0"></div><div class="a" style="left:1337px;top:836px;width:1px;height:1px;background:#a0a0a0"></div>
<!-- status -->
<div class="t" style="left:11px;top:821px;letter-spacing:0.7px">/home/rod/oghma/oghma8.0/test</div>

</body></html>
